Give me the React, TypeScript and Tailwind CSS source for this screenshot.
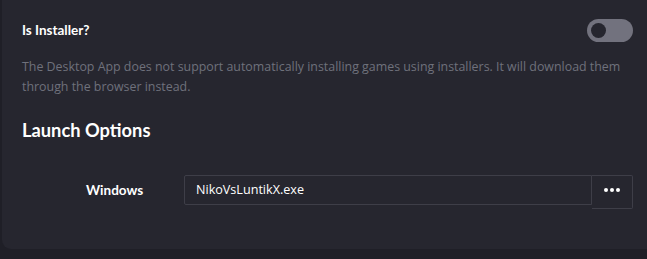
import React from 'react'

function Toggle({ on }: { on: boolean }) {
  return (
    <div className={`w-[46px] h-[23px] rounded-full flex items-center px-[4px] ${on ? 'bg-[#5865f2] justify-end' : 'bg-[#72727e] justify-start'}`}>
      <div className="w-[15px] h-[15px] rounded-full bg-[#26262f]" />
    </div>
  )
}

export default function App() {
  return (
    <div className="w-[647px] h-[259px] bg-[#1f1f27] overflow-hidden font-['Lato',sans-serif]">
      <div className="ml-[2px] h-[249px] bg-[#26262f] rounded-bl-[9px] pl-[20px] pr-[14px] pt-[19px]">
        <div className="flex items-center justify-between">
          <span className="text-white font-bold text-[13.5px] leading-[23px]">Is Installer?</span>
          <Toggle on={false} />
        </div>
        <p className="mt-[15px] -mr-[9px] text-[#6f717c] text-[12.4px] leading-[20px] font-['Open_Sans',sans-serif]">
          The Desktop App does not support automatically installing games using installers. It will download them through the browser instead.
        </p>
        <h2 className="mt-[21px] text-white font-bold text-[18.3px] leading-[24px]">Launch Options</h2>
        <div className="mt-[33px] flex items-start">
          <span className="w-[162px] pl-[64px] text-white font-bold text-[13.5px] leading-[30px]">Windows</span>
          <div className="flex-1 h-[30px] border border-[#3e3e48] rounded-l-[2px] flex items-center px-[11px]">
            <span className="text-white text-[12.6px] font-['Open_Sans',sans-serif]">NikoVsLuntikX.exe</span>
          </div>
          <div className="w-[41px] h-[34px] border-y border-r border-[#3e3e48] rounded-r-[2px] flex items-start justify-center pt-[12px] gap-[2px]">
            <span className="w-[4px] h-[4px] rounded-full bg-white" />
            <span className="w-[4px] h-[4px] rounded-full bg-white" />
            <span className="w-[4px] h-[4px] rounded-full bg-white" />
          </div>
        </div>
      </div>
    </div>
  )
}
